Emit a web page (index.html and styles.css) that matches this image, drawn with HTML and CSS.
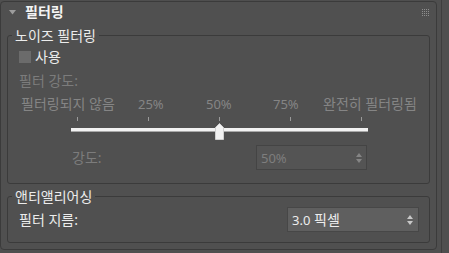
FILE: index.html
```html
<!DOCTYPE html>
<html lang="ko">
<head>
<meta charset="utf-8">
<link rel="stylesheet" href="styles.css">
</head>
<body>
<div class="app">
  <div class="panel">
    <div class="header">
      <svg class="caret" width="7" height="5" viewBox="0 0 7 5"><path d="M0 0H7L3.5 4.5Z" fill="#9c9c9c"/></svg>
      <span class="title">필터링</span>
      <svg class="grip" width="7" height="7" viewBox="0 0 7 7" fill="#8e8e8e">
        <rect x="0" y="0" width="1" height="1"/><rect x="2" y="0" width="1" height="1"/><rect x="4" y="0" width="1" height="1"/><rect x="6" y="0" width="1" height="1"/>
        <rect x="0" y="2" width="1" height="1"/><rect x="2" y="2" width="1" height="1"/><rect x="4" y="2" width="1" height="1"/><rect x="6" y="2" width="1" height="1"/>
        <rect x="0" y="4" width="1" height="1"/><rect x="2" y="4" width="1" height="1"/><rect x="4" y="4" width="1" height="1"/><rect x="6" y="4" width="1" height="1"/>
        <rect x="0" y="6" width="1" height="1"/><rect x="2" y="6" width="1" height="1"/><rect x="4" y="6" width="1" height="1"/><rect x="6" y="6" width="1" height="1"/>
      </svg>
    </div>

    <fieldset class="group group-noise">
      <legend>노이즈 필터링</legend>
      <label class="check-row"><span class="checkbox"></span><span>사용</span></label>
      <div class="dim-label">필터 강도:</div>
      <div class="scale-labels">
        <span>필터링되지 않음</span>
        <span class="num">25%</span>
        <span class="num">50%</span>
        <span class="num">75%</span>
        <span>완전히 필터링됨</span>
      </div>
      <div class="slider">
        <div class="ticks"><i></i><i></i><i></i><i></i><i></i></div>
        <div class="track-area">
          <div class="track"></div>
          <svg class="thumb" style="left:144px" width="9" height="17" viewBox="0 0 9 17"><path d="M0.5 4.5L4.5 0.5L8.5 4.5V16.5H0.5Z" fill="#f2f2f2" stroke="#d0d0d0" stroke-width="1"/></svg>
        </div>
      </div>
      <div class="amount-row">
        <span class="amount-label">강도:</span>
        <div class="spinner">
          <span class="num">50%</span>
          <svg class="arrows" width="6" height="10" viewBox="0 0 6 10"><path d="M0 4L3 0L6 4Z M0 6L3 10L6 6Z" fill="#858585"/></svg>
        </div>
      </div>
    </fieldset>

    <fieldset class="group group-aa">
      <legend>앤티앨리어싱</legend>
      <div class="combo-row">
        <span class="combo-label">필터 지름:</span>
        <div class="combo">
          <span><span class="num">3.0</span> 픽셀</span>
          <svg class="arrows" width="6" height="10" viewBox="0 0 6 10"><path d="M0 4L3 0L6 4Z M0 6L3 10L6 6Z" fill="#c8c8c8"/></svg>
        </div>
      </div>
    </fieldset>
  </div>
  <div class="scroll"></div>
</div>
</body>
</html>
```

FILE: styles.css
```css
* { box-sizing: border-box; }
html, body { margin: 0; padding: 0; }
body {
  background: #4f4f4f;
  font-family: "Noto Sans", "Noto Sans CJK KR", sans-serif;
  font-size: 14px;
  color: #e8e8e8;
  width: 449px;
  height: 253px;
  overflow: hidden;
}
.num { font-size: 13px; }
.app {
  display: flex;
  height: 253px;
}
.panel {
  width: 437px;
  height: 249px;
  margin-top: 1px;
  border: 1px solid #3b3b3b;
  border-radius: 4px;
  background: #505050;
  display: flex;
  flex-direction: column;
}
.scroll {
  margin-left: 4px;
  width: 8px;
  height: 253px;
  border-left: 1px solid #3e3e3e;
  background: #4f4f4f;
}
.header {
  height: 18px;
  display: flex;
  align-items: center;
  padding: 0 7px 0 8px;
}
.caret { margin-top: 3px; }
.title {
  margin-left: 9px;
  margin-top: 2px;
  font-weight: bold;
  color: #f4f4f4;
  line-height: 16px;
}
.grip { margin-left: auto; margin-top: 3px; }

.group {
  margin: 0 6px;
  padding: 0;
  border: 1px solid #3b3b3b;
  border-radius: 3px;
  min-width: 0;
}
.group legend {
  margin-left: 4px;
  padding: 0 3px;
  height: 15px;
  line-height: 15px;
  color: #ececec;
}
.group-noise { margin-top: 8px; padding-bottom: 13px; }
.group-aa { margin-top: 5px; padding: 3px 0 10px; }

.check-row {
  display: flex;
  align-items: center;
  height: 16px;
  margin-top: 6px;
  padding-left: 11px;
  gap: 4px;
  color: #ececec;
  line-height: 16px;
}
.checkbox {
  width: 12px;
  height: 12px;
  background: #6b6b6b;
}
.dim-label {
  margin-top: 8px;
  height: 16px;
  line-height: 16px;
  padding-left: 11px;
  color: #7c7c7c;
}
.scale-labels {
  margin-top: 7px;
  height: 16px;
  line-height: 16px;
  display: grid;
  grid-template-columns: 117px 68px 67px 50px auto;
  padding-left: 13px;
  color: #858585;
  white-space: nowrap;
}

.slider {
  margin-left: 63px;
  width: 297px;
}
.ticks {
  margin-top: 5px;
  height: 4px;
  display: flex;
  justify-content: space-between;
  padding: 0 6px;
}
.ticks i {
  display: block;
  width: 1px;
  height: 4px;
  background: #9a9a9a;
}
.track-area {
  position: relative;
  height: 19px;
  padding-top: 7px;
}
.track {
  height: 4px;
  background: #f2f2f2;
  border-bottom: 1px solid #a8a8a8;
}
.thumb {
  position: absolute;
  top: 2px;
}

.amount-row {
  margin-top: 5px;
  display: flex;
  align-items: center;
  padding-left: 64px;
}
.amount-label {
  width: 184px;
  color: #7c7c7c;
  line-height: 16px;
}
.spinner {
  width: 111px;
  height: 25px;
  background: #545454;
  border: 1px solid #444444;
  display: flex;
  align-items: center;
  padding: 0 4px 0 4px;
  color: #7e7e7e;
  line-height: 16px;
}
.spinner .arrows, .combo .arrows { margin-left: auto; }

.combo-row {
  display: flex;
  align-items: center;
  padding-left: 11px;
}
.combo-label {
  width: 268px;
  color: #ececec;
  line-height: 16px;
}
.combo {
  width: 132px;
  height: 25px;
  background: #5f5f5f;
  border: 1px solid #474747;
  display: flex;
  align-items: center;
  padding: 0 5px 0 4px;
  color: #ededed;
  line-height: 16px;
}
```
